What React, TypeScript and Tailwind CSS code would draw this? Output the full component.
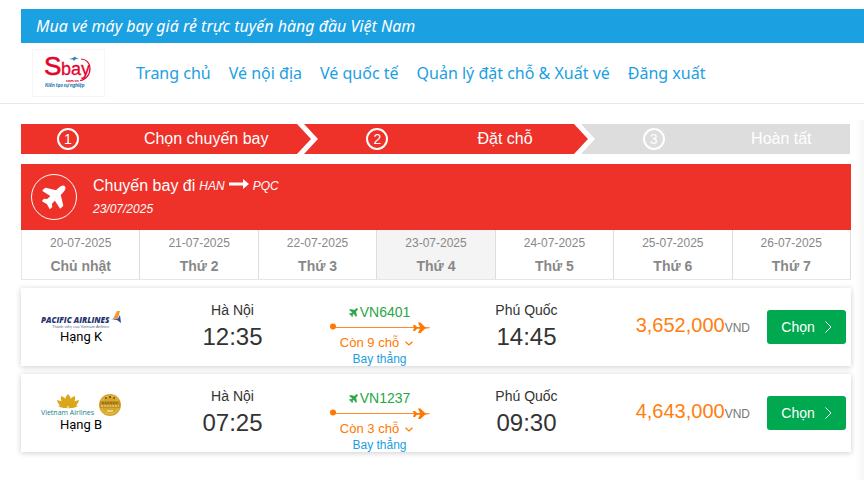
import React, { useState } from 'react';
import clsx from 'clsx';

type Flight = {
  code: string;
  airline: 'pacific' | 'vietnam';
  cabin: string;
  depart: string;
  arrive: string;
  seats: number;
  price: string;
};

const NAV = ['Trang chủ', 'Vé nội địa', 'Vé quốc tế', 'Quản lý đặt chỗ & Xuất vé', 'Đăng xuất'];

const DAYS = [
  { date: '20-07-2025', name: 'Chủ nhật' },
  { date: '21-07-2025', name: 'Thứ 2' },
  { date: '22-07-2025', name: 'Thứ 3' },
  { date: '23-07-2025', name: 'Thứ 4' },
  { date: '24-07-2025', name: 'Thứ 5' },
  { date: '25-07-2025', name: 'Thứ 6' },
  { date: '26-07-2025', name: 'Thứ 7' },
];

const FLIGHTS: Flight[] = [
  { code: 'VN6401', airline: 'pacific', cabin: 'Hạng K', depart: '12:35', arrive: '14:45', seats: 9, price: '3,652,000' },
  { code: 'VN1237', airline: 'vietnam', cabin: 'Hạng B', depart: '07:25', arrive: '09:30', seats: 3, price: '4,643,000' },
];

const SbayLogo = () => (
  <svg width="73" height="48" viewBox="0 0 73 48" role="img" aria-label="Sbay">
    <rect x="0.5" y="0.5" width="72" height="47" fill="#fff" stroke="#f6f6f6" />
    <text x="12" y="26" fontFamily="Liberation Sans, sans-serif" fontSize="26" fill="#e4032e" stroke="#e4032e" strokeWidth="0.6">S</text>
    <text x="29" y="26" fontFamily="Liberation Sans, sans-serif" fontSize="18" fill="#e4032e" stroke="#e4032e" strokeWidth="0.3">bay</text>
    <path d="M49 10C54 10 58 14 58 19C58 26 54 31 48 31.500" fill="none" stroke="#e4032e" strokeWidth="1.2" />
    <path d="M37 10L41 9L43 7.500L44 9L47 9.500L43 10.500L42 12L41 10.500Z" fill="#2b7fb8" />
    <text x="34" y="33" fontFamily="Lato, sans-serif" fontSize="4" fontWeight="900" fill="#e4032e">com.vn</text>
    <text x="13" y="38" fontFamily="Lato, sans-serif" fontSize="5" fontWeight="900" fontStyle="italic" fill="#1c75b5">Kiến tạo sự nghiệp</text>
  </svg>
);

const PacificLogo = () => (
  <svg width="80" height="20" viewBox="0 0 80 20" role="img" aria-label="Pacific Airlines">
    <text x="0" y="14" fontFamily="Open Sans, sans-serif" fontSize="8" fontWeight="800" fontStyle="italic" fill="#25346f">PACIFIC AIRLINES</text>
    <text x="11" y="19" fontFamily="Liberation Sans, sans-serif" fontSize="4" fill="#5d6a9b">Thành viên của Vietnam Airlines</text>
    <path d="M76 2H79L77 9L72 10Z" fill="#f6962c" />
    <path d="M70 10L77 9.500L79 6L80 14L76 11Z" fill="#2f4d8c" />
  </svg>
);

const VietnamLogo = () => (
  <svg width="80" height="23" viewBox="0 0 80 23" role="img" aria-label="Vietnam Airlines">
    <g fill="#dba51c">
      <path d="M27 0C31 4 31 9 27 13C23 9 23 4 27 0Z" />
      <path d="M20 2C25 4 28 8 26 13C22 11 19 7 20 2Z" />
      <path d="M34 2C29 4 26 8 28 13C32 11 35 7 34 2Z" />
      <path d="M16 6C21 7 25 9 26 14C21 14 17 11 16 6Z" />
      <path d="M38 6C33 7 29 9 28 14C33 14 37 11 38 6Z" />
      <path d="M17 12C22 11 25 12 27 14C29 12 32 11 37 12C33 15 21 15 17 12Z" />
    </g>
    <text x="0" y="21" fontFamily="Open Sans, sans-serif" fontSize="7" fill="#16808c">Vietnam Airlines</text>
    <circle cx="69" cy="11" r="11" fill="#d6a62c" />
    <circle cx="69" cy="11" r="9" fill="none" stroke="#e6c25c" strokeWidth="0.8" />
    <path d="M64 4H65.500M68 3H70M72.500 4H74" stroke="#5b4208" strokeWidth="1.6" />
    <rect x="59" y="7" width="20" height="7" fill="#c2941f" />
    <path d="M61 9H77" stroke="#6b5212" strokeWidth="1.2" strokeDasharray="2 0.7" />
    <path d="M60 12H78" stroke="#f7e2a0" strokeWidth="1.2" strokeDasharray="2 0.8" />
    <path d="M66 17H72" stroke="#f7e2a0" strokeWidth="1.5" />
  </svg>
);

const Plane = ({ size }: { size: number }) => (
  <svg width={size} height={size} viewBox="0 0 24 24" fill="currentColor" stroke="currentColor" strokeWidth="1.4" strokeLinejoin="round" aria-hidden="true">
    <path d="M22.300 1.700C23.300 2.700 22.600 5 21 6.600L18 9.800L20.600 20.600L18.400 22.800L13 14.600L9.200 18.600L9.600 21.800L8 23.200L5.400 18.600L0.800 16L2.200 14.400L5.400 14.800L9.400 11L1.200 5.600L3.400 3.400L14.200 6L17.400 3C19 1.400 21.300 0.700 22.300 1.700Z" />
  </svg>
);

const RouteLine = () => (
  <svg width="100" height="14" viewBox="0 0 100 14" aria-hidden="true">
    <path d="M3 7.500H84" stroke="#ff8a2a" />
    <circle cx="3" cy="6.500" r="3" fill="#ff7800" />
    <path d="M83 5H85L87 7H90L88 2.500H90.500L95 7L100 7.500V8L95 8.800L90.500 13H88L90 8.800H87L85 11H83L84 8Z" fill="#ff7800" />
  </svg>
);

// white chevron between two steps, its left side filled like the finished step
const StepArrow = () => (
  <svg className="shrink-0" width="21" height="30" viewBox="0 0 21 30" aria-hidden="true">
    <path d="M0 0H7L21 15L7 30H0Z" fill="#fff" />
    <path d="M0 0L14 15L0 30Z" fill="#ee3129" />
  </svg>
);

const Step = ({ no, label, done }: { no: number; label: string; done: boolean }) => (
  <li className={clsx('flex flex-1 items-center text-white', done ? 'bg-[#ee3129]' : 'bg-[#dddddd]')}>
    {no > 1 && <StepArrow />}
    <span className={clsx('flex justify-center', no > 1 ? 'w-[118px]' : 'w-[94px]')}>
      <span className="flex size-[22px] items-center justify-center rounded-full border-2 border-white text-sm">{no}</span>
    </span>
    <span className="flex-1 text-center text-base">{label}</span>
  </li>
);

const Place = ({ city, time }: { city: string; time: string }) => (
  <div className="flex-1 pt-[14px] text-center text-[#333]">
    <div className="text-sm leading-4">{city}</div>
    <div className="text-2xl leading-[38px]">{time}</div>
  </div>
);

const FlightRow = ({ flight }: { flight: Flight }) => (
  <article className="flex bg-white pr-[5px] shadow-[0_1px_6px_rgba(0,0,0,0.2)]">
    <div className="mr-[18px] flex w-[120px] flex-col items-center justify-center">
      {flight.airline === 'pacific' ? <PacificLogo /> : <VietnamLogo />}
      <span className="font-[Roboto,sans-serif] text-[13px] leading-4 text-black">{flight.cabin}</span>
    </div>
    <Place city="Hà Nội" time={flight.depart} />
    <div className="flex flex-1 flex-col items-center pt-4">
      <div className="flex items-center gap-0.5 text-sm leading-4 text-[#28a745]">
        <Plane size={9} />
        {flight.code}
      </div>
      <RouteLine />
      <button type="button" className="mr-1.5 flex items-center gap-1.5 text-[13px] leading-[18px] text-[#ff7800]">
        Còn {flight.seats} chỗ
        <svg width="8" height="5" viewBox="0 0 8 5" aria-hidden="true">
          <path d="M0.500 0.700L4 4L7.500 0.700" fill="none" stroke="#ff7800" strokeWidth="1.200" />
        </svg>
      </button>
      <div className="text-xs leading-[14px] text-[#1ba0e2]">Bay thẳng</div>
    </div>
    <Place city="Phú Quốc" time={flight.arrive} />
    <div className="w-[150px] self-center pb-1 text-right text-xl leading-6 text-[#ff7f0e]">
      {flight.price}
      <span className="text-xs text-[#777]">VND</span>
    </div>
    <button
      type="button"
      className="ml-[17px] flex h-[34px] w-[79px] items-center justify-center gap-2.5 self-center rounded-[3px] bg-[#00a84f] text-sm text-white"
    >
      Chọn
      <svg width="7" height="12" viewBox="0 0 7 12" aria-hidden="true">
        <path d="M0.500 0.500L6 6L0.500 11.500" fill="none" stroke="#fff" />
      </svg>
    </button>
  </article>
);

const App: React.FC = () => {
  const [day, setDay] = useState('23-07-2025');

  return (
    <div className="min-h-screen bg-white pt-[9px] font-['Liberation_Sans',Arial,sans-serif]">
      <header className="border-b border-[#e8e8e8] pl-[21px] font-['Noto_Sans',sans-serif]">
        <p className="bg-[#1ba0e2] pl-[15px] text-base leading-[34px] text-white italic">
          Mua vé máy bay giá rẻ trực tuyến hàng đầu Việt Nam
        </p>
        <div className="flex h-[60px] items-center pl-[11px]">
          <a href="#">
            <SbayLogo />
          </a>
          <nav className="ml-[31px] flex gap-[18px] text-base text-[#1ba0e2]">
            {NAV.map((item) => (
              <a key={item} href="#" className="whitespace-nowrap">{item}</a>
            ))}
          </nav>
        </div>
      </header>

      <div className="flex">
        <main className="min-w-0 flex-1 pt-5 pr-1 pl-[21px]">
          <ol className="mr-px flex h-[30px]">
            <Step no={1} label="Chọn chuyến bay" done />
            <Step no={2} label="Đặt chỗ" done />
            <Step no={3} label="Hoàn tất" done={false} />
          </ol>

          <section className="mt-2.5 flex h-[66px] items-center gap-4 bg-[#ee3129] px-2.5 text-white">
            <span className="flex size-[46px] items-center justify-center rounded-full border border-white">
              <Plane size={24} />
            </span>
            <div>
              <h1 className="flex items-center text-base leading-6">
                Chuyến bay đi
                <span className="ml-1 flex items-center gap-1 text-xs italic">
                  HAN
                  <svg width="20" height="10" viewBox="0 0 20 10" className="mb-1" aria-hidden="true">
                    <path d="M0 3.500H14V0L20 5L14 10V6.500H0Z" fill="currentColor" />
                  </svg>
                  PQC
                </span>
              </h1>
              <p className="text-xs leading-[22px] italic">23/07/2025</p>
            </div>
          </section>

          <div className="flex border-b border-l border-[#e6e6e6]">
            {DAYS.map((d) => (
              <button
                key={d.date}
                type="button"
                onClick={() => setDay(d.date)}
                className={clsx(
                  'h-[49px] flex-1 border-r border-[#dddddd] pb-0.5 text-[#888]',
                  d.date === day && 'bg-[#f4f4f4]'
                )}
              >
                <span className="block text-xs leading-6">{d.date}</span>
                <span className="block text-sm leading-[22px] font-bold">{d.name}</span>
              </button>
            ))}
          </div>

          <div className="mt-2 flex flex-col gap-2">
            {FLIGHTS.map((f) => (
              <FlightRow key={f.code} flight={f} />
            ))}
          </div>
        </main>
        <aside className="mt-4 h-[360px] w-[9px] bg-linear-to-r from-white to-[#f6f6f6]" />
      </div>
    </div>
  );
};

export default App;
